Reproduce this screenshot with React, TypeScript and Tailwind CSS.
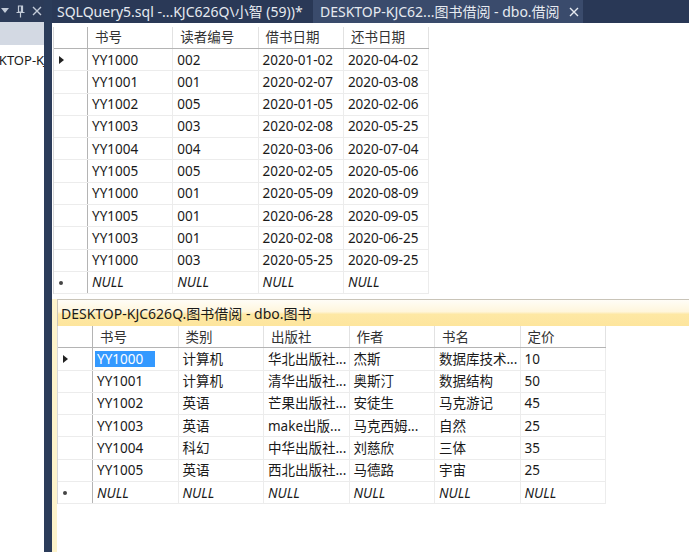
import React from 'react';

const topCols = ['书号', '读者编号', '借书日期', '还书日期'];
const topRows = [
    ['YY1000', '002', '2020-01-02', '2020-04-02'],
    ['YY1001', '001', '2020-02-07', '2020-03-08'],
    ['YY1002', '005', '2020-01-05', '2020-02-06'],
    ['YY1003', '003', '2020-02-08', '2020-05-25'],
    ['YY1004', '004', '2020-03-06', '2020-07-04'],
    ['YY1005', '005', '2020-02-05', '2020-05-06'],
    ['YY1000', '001', '2020-05-09', '2020-08-09'],
    ['YY1005', '001', '2020-06-28', '2020-09-05'],
    ['YY1003', '001', '2020-02-08', '2020-06-25'],
    ['YY1000', '003', '2020-05-25', '2020-09-25'],
];

const bookCols = ['书号', '类别', '出版社', '作者', '书名', '定价'];
const bookRows = [
    ['YY1000', '计算机', '华北出版社...', '杰斯', '数据库技术...', '10'],
    ['YY1001', '计算机', '清华出版社...', '奥斯汀', '数据结构', '50'],
    ['YY1002', '英语', '芒果出版社...', '安徒生', '马克游记', '45'],
    ['YY1003', '英语', 'make出版...', '马克西姆...', '自然', '25'],
    ['YY1004', '科幻', '中华出版社...', '刘慈欣', '三体', '35'],
    ['YY1005', '英语', '西北出版社...', '马德路', '宇宙', '25'],
];

function Arrow() {
    return (
        <svg width="5" height="8" viewBox="0 0 5 8">
            <path d="M0 0 L5 4 L0 8 Z" fill="#222" />
        </svg>
    );
}

function Grid({ cols, rows, headW, colW, headH, selected }: { cols: string[]; rows: string[][]; headW: string; colW: string; headH: string; selected?: boolean }) {
    return (
        <div className="border-l border-[#d8d8d8] w-fit">
            <div className={`flex ${headH} border-b border-[#b4b4b4]`}>
                <div className={`${headW} border-r border-[#b4b4b4]`} />
                {cols.map((c, i) => (
                    <div key={i} className={`${colW} border-r border-[#e2e2e2] pl-[7px] flex items-center text-[#333]`}>{c}</div>
                ))}
            </div>
            {rows.map((r, ri) => (
                <div key={ri} className="flex h-[22.3px] border-b border-[#ececec]">
                    <div className={`${headW} border-r border-[#b4b4b4] flex items-center pl-[5px]`}>
                        {ri === 0 && <Arrow />}
                    </div>
                    {r.map((v, ci) => (
                        <div key={ci} className={`${colW} border-r border-[#ececec] flex items-center pl-[4px] whitespace-nowrap overflow-hidden`}>
                            {selected && ri === 0 && ci === 0 ? (
                                <span className="bg-[#3399ff] text-white pl-[2px] pr-[12px] -ml-[2px] leading-[16px]">{v}</span>
                            ) : v}
                        </div>
                    ))}
                </div>
            ))}
            <div className="flex h-[22.3px] border-b border-[#ececec]">
                <div className={`${headW} border-r border-[#b4b4b4] flex items-center pl-[5px]`}>
                    <span className="w-[4px] h-[4px] rounded-full bg-[#444] block" />
                </div>
                {cols.map((_, ci) => (
                    <div key={ci} className={`${colW} border-r border-[#ececec] flex items-center pl-[4px] italic`}>NULL</div>
                ))}
            </div>
        </div>
    );
}

export default function App() {
    return (
        <div className="w-[689px] h-[552px] flex overflow-hidden bg-white text-[13.5px] text-[#1a1a1a] font-['Noto_Sans','Noto_Sans_CJK_SC',sans-serif]">
            {/* left explorer strip */}
            <div className="w-[44px] flex flex-col shrink-0">
                <div className="h-[22px] bg-[#2c3b58] flex items-center gap-[7px] pl-[1px] text-[#c3cbd8]">
                    <svg width="8" height="6" viewBox="0 0 8 6"><path d="M0 0 H8 L4 5 Z" fill="#c3cbd8" /></svg>
                    <svg width="9" height="13" viewBox="0 0 9 13">
                        <path d="M2.5 1 H6.5 V7 H2.5 Z M0.5 7.5 H8.5 M4.5 8 V12.5 M5.5 1.5 V6.5" stroke="#c3cbd8" strokeWidth="1.2" fill="none" />
                    </svg>
                    <svg width="10" height="10" viewBox="0 0 10 10"><path d="M1 1 L9 9 M9 1 L1 9" stroke="#c3cbd8" strokeWidth="1.4" /></svg>
                </div>
                <div className="h-[23px] bg-[#d3d9e3]" />
                <div className="h-[32px] overflow-hidden whitespace-nowrap flex items-center text-[13px]">
                    <span className="-ml-[25px]">DESKTOP-KJC626Q</span>
                </div>
            </div>
            <div className="w-[8px] bg-[#2b3c5a] shrink-0" />
            {/* main */}
            <div className="flex-1 flex flex-col min-w-0">
                <div className="h-[23px] bg-[#293856] flex items-end text-[14px] text-[#e6eaf0] whitespace-nowrap">
                    <div className="h-[23px] w-[258px] pl-[5px] flex items-center bg-[#2a3957]">SQLQuery5.sql -...KJC626Q\小智 (59))*</div>
                    <div className="h-[23px] w-[270px] ml-[3px] pl-[7px] flex items-center bg-[#3a4b6c]">
                        DESKTOP-KJC62...图书借阅 - dbo.借阅
                        <svg className="ml-[9px]" width="10" height="10" viewBox="0 0 10 10"><path d="M1 1 L9 9 M9 1 L1 9" stroke="#e6eaf0" strokeWidth="1.4" /></svg>
                    </div>
                </div>
                <div className="pt-[4px] pl-[1px]">
                    <Grid cols={topCols} rows={topRows} headW="w-[34px]" colW="w-[85.3px]" headH="h-[22px]" />
                </div>
                <div className="mt-[5px] flex-1 flex">
                    <div className="w-[5px] bg-[#fdf3cb] shrink-0" />
                    <div className="flex-1 flex flex-col">
                        <div className="h-[27px] border-t border-l border-[#c9c4b8] pl-[3px] flex items-center text-[14px] bg-[linear-gradient(to_bottom,#fffdf7_0%,#fff6dc_45%,#fee8a4_55%,#fde59d_100%)]">
                            DESKTOP-KJC626Q.图书借阅 - dbo.图书
                        </div>
                        <Grid cols={bookCols} rows={bookRows} headW="w-[35px]" colW="w-[85.5px]" headH="h-[22px]" selected />
                    </div>
                </div>
            </div>
        </div>
    );
}
